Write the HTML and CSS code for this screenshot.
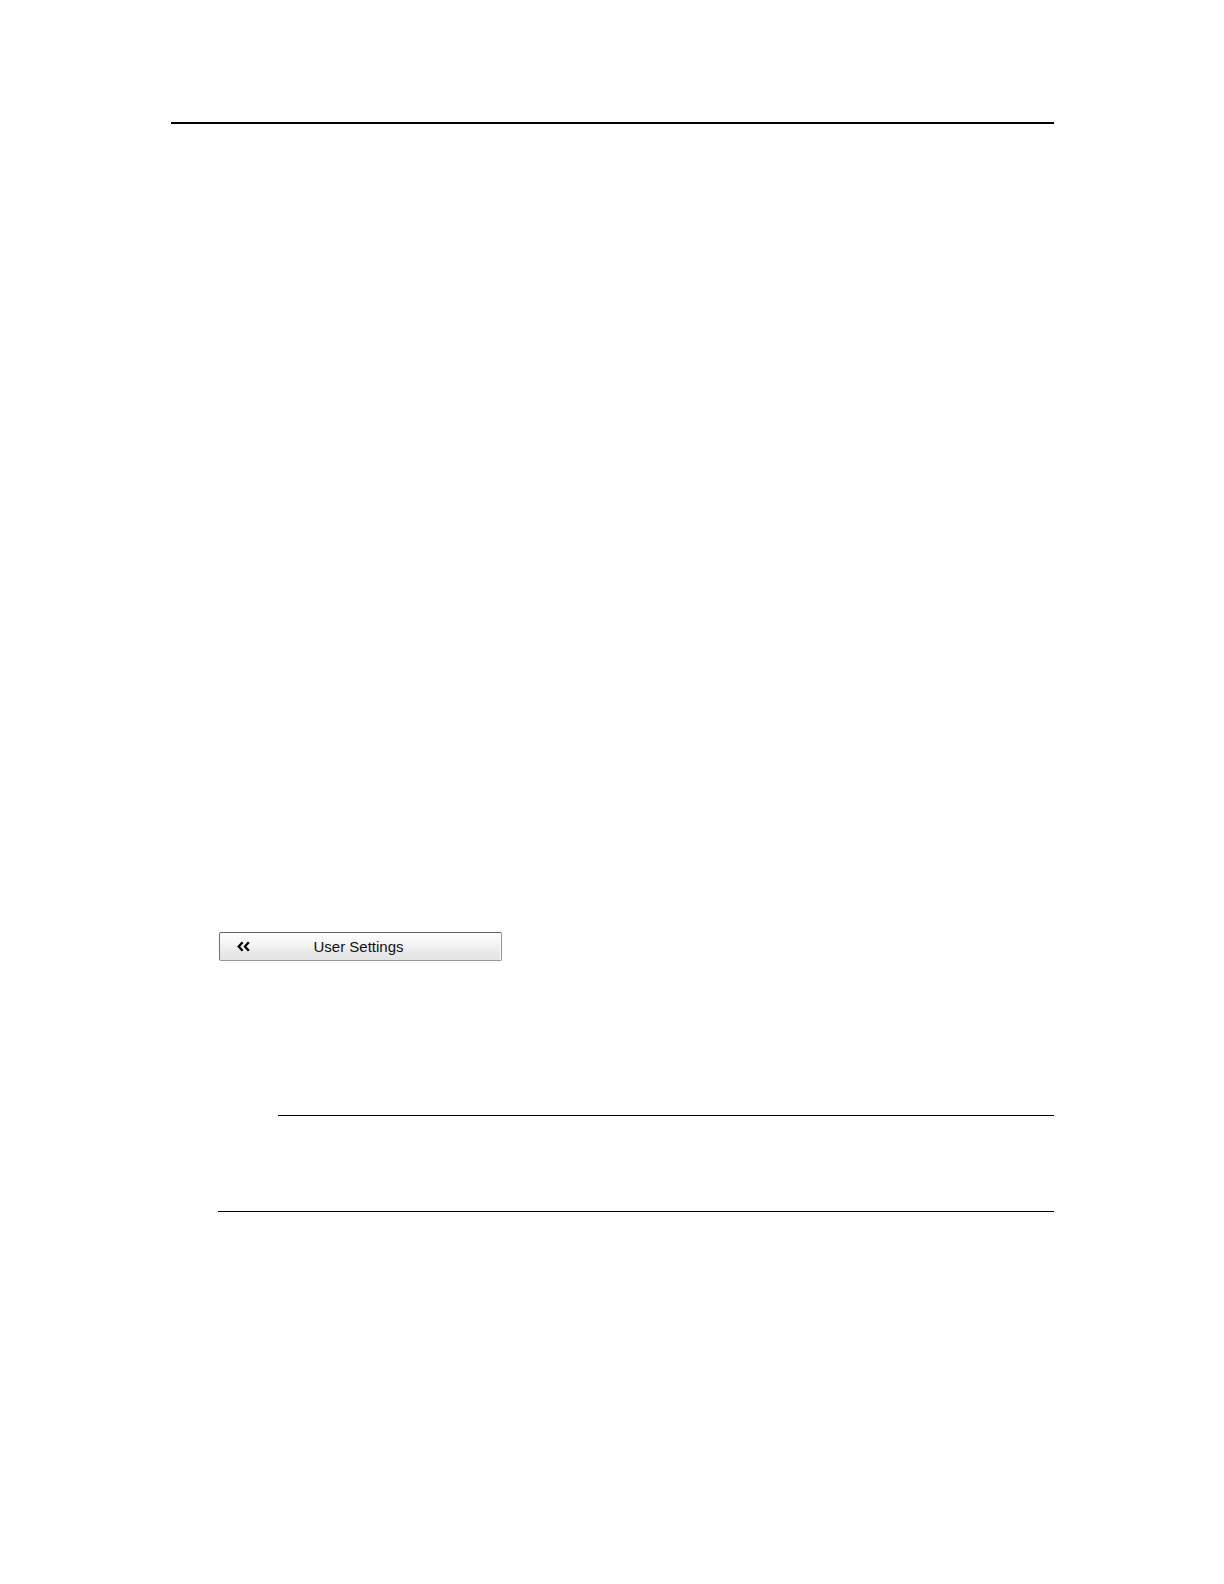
FILE: index.html
```
<!DOCTYPE html>
<html lang="en">
    <head>
        <meta charset="UTF-8">
        <meta name="viewport" content="width=device-width, initial-scale=1.0">
        <title>User Settings</title>
        <link rel="stylesheet" href="styles.css">
    </head>
    <body>
        <main class="page">
            <hr class="rule rule-header">

            <div class="content">
                <button type="button" class="settings-button">
                    <svg class="chevrons" viewBox="0 0 13 11" aria-hidden="true">
                        <path d="M5.6 1.2 L1.7 5.5 L5.6 9.8 M11.8 1.2 L7.9 5.5 L11.8 9.8"/>
                    </svg>
                    <span class="settings-label">User Settings</span>
                </button>

                <hr class="rule rule-note">
                <hr class="rule">
            </div>
        </main>
    </body>
</html>
```

FILE: styles.css
```
body {
    margin: 0;
    background: white;
    font-family: "Liberation Sans", Arial, sans-serif;
}

.page {
    padding: 122px 170px 120px 171px;
}

.rule {
    height: 1px;
    margin: 0;
    border: none;
    background: black;
}

.rule-header {
    height: 2px;
}

.content {
    padding: 808px 0 0 47px;
}

.settings-button {
    display: grid;
    grid-template-columns: 13px 1fr 13px;
    align-items: center;
    width: 283px;
    height: 29px;
    margin: 0 0 0 1px;
    padding: 0 21px 0 17px;
    border: 1px solid #989898;
    border-top-color: #606060;
    border-left-color: #707070;
    border-radius: 2px;
    background: linear-gradient(#fefefe, #f5f5f5 40%, #e9e9e9 70%, #e5e5e5);
    box-shadow: inset -1px 0 #f8f8f8;
    color: #111;
    font-family: inherit;
    font-size: 15px;
    cursor: pointer;
}

.settings-button:hover {
    filter: brightness(97%);
}

.settings-label {
    text-align: center;
}

.chevrons {
    width: 13px;
    height: 11px;
    fill: none;
    stroke: black;
    stroke-width: 2.3;
}

.rule-note {
    margin: 154px 0 95px 60px;
}
```
